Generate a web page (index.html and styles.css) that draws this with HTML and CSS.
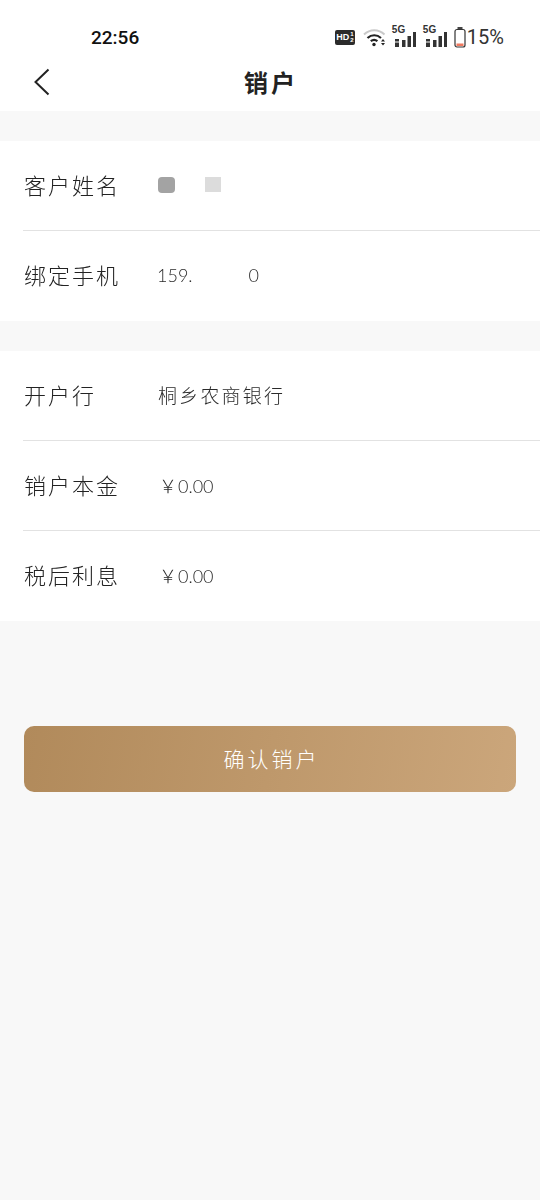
FILE: index.html
```html
<!DOCTYPE html>
<html lang="zh-CN">
<head>
    <meta charset="UTF-8">
    <meta name="viewport" content="width=device-width, initial-scale=1.0">
    <title>销户</title>
    <link rel="stylesheet" href="styles.css">
</head>
<body>
    <div class="top-area">
        <div class="status-bar">
            <div class="time">22:56</div>
            <div class="status-icons">
                <div class="hd-badge"><span class="hd-text">HD</span><span class="hd-nums"><i>1</i><i>2</i></span></div>
                <svg class="wifi" width="24" height="19" viewBox="0 0 24 19">
                    <path d="M1 6.500C7 .8 15.500 .8 21.500 6.500" fill="none" stroke="#c9c9c9" stroke-width="2"/>
                    <path d="M4.500 10C8.500 6.300 14 6.300 18 10" fill="none" stroke="#222" stroke-width="2.200"/>
                    <path d="M7.800 13.200C9.800 11.500 12.400 11.500 14.400 13.200" fill="none" stroke="#222" stroke-width="2.200"/>
                    <circle cx="11" cy="16.500" r="1.700" fill="#222"/>
                    <path d="M18 13.500h4l-2-2.500zM18 15h4l-2 2.500z" fill="#222"/>
                </svg>
                <div class="signal">
                    <span class="net">5G</span>
                    <svg width="24" height="18" viewBox="0 0 24 18">
                        <rect x="3" y="9" width="4" height="2.500" fill="#333"/><rect x="3" y="12.500" width="4" height="4.500" fill="#333"/>
                        <rect x="10" y="10" width="3.500" height="7" fill="#333"/>
                        <rect x="15.500" y="6" width="3.500" height="11" fill="#333"/>
                        <rect x="21" y="2" width="3" height="15" fill="#333"/>
                    </svg>
                </div>
                <div class="signal">
                    <span class="net">5G</span>
                    <svg width="24" height="18" viewBox="0 0 24 18">
                        <rect x="3" y="9" width="4" height="2.500" fill="#333"/><rect x="3" y="12.500" width="4" height="4.500" fill="#333"/>
                        <rect x="10" y="10" width="3.500" height="7" fill="#333"/>
                        <rect x="15.500" y="6" width="3.500" height="11" fill="#333"/>
                        <rect x="21" y="2" width="3" height="15" fill="#333"/>
                    </svg>
                </div>
                <svg class="battery" width="12" height="21" viewBox="0 0 12 21">
                    <rect x="3.500" y="0" width="5" height="2" fill="#444"/>
                    <rect x="1" y="2.500" width="10" height="17.500" rx="2" fill="none" stroke="#333" stroke-width="1.200"/>
                    <rect x="2.500" y="16.500" width="7" height="2.500" fill="#f0795f"/>
                </svg>
                <div class="battery-text">15%</div>
            </div>
        </div>
        <div class="nav-bar">
            <svg class="back" width="18" height="28" viewBox="0 0 18 28">
                <path d="M15.500 1.500L2.500 14L15.500 26.500" fill="none" stroke="#222" stroke-width="2"/>
            </svg>
            <div class="page-title">销户</div>
        </div>
    </div>

    <div class="section">
        <div class="row">
            <div class="label">客户姓名</div>
            <div class="value name-mask">
                <span class="mask-dark"></span>
                <span class="mask-light"></span>
            </div>
        </div>
        <div class="row">
            <div class="label">绑定手机</div>
            <div class="value phone"><span>159.</span><span>0</span></div>
        </div>
    </div>

    <div class="section">
        <div class="row">
            <div class="label">开户行</div>
            <div class="value bank">桐乡农商银行</div>
        </div>
        <div class="row">
            <div class="label">销户本金</div>
            <div class="value money"><span class="yen">￥</span>0.00</div>
        </div>
        <div class="row">
            <div class="label">税后利息</div>
            <div class="value money"><span class="yen">￥</span>0.00</div>
        </div>
    </div>

    <div class="btn-wrap">
        <button class="confirm-btn">确认销户</button>
    </div>
</body>
</html>
```

FILE: styles.css
```css
html, body {
    margin: 0;
    padding: 0;
    height: 100%;
    overflow: hidden;
}
body {
    background: #f8f8f8;
    font-family: "Noto Sans CJK SC", "Noto Sans", sans-serif;
    color: #333;
}
.top-area {
    background: #fff;
    height: 111px;
    margin-bottom: 30px;
}
.status-bar {
    display: flex;
    justify-content: space-between;
    align-items: center;
    box-sizing: border-box;
    height: 56px;
    padding: 18px 36px 0 91px;
}
.time {
    font-family: Roboto, "Liberation Sans", sans-serif;
    font-size: 19px;
    font-weight: 500;
    color: #111;
}
.status-icons {
    display: flex;
    align-items: center;
}
.hd-badge {
    display: flex;
    align-items: center;
    justify-content: center;
    gap: 1px;
    width: 20px;
    height: 15px;
    background: #2b2b2b;
    border-radius: 2px;
    color: #fff;
    margin-right: 8px;
}
.hd-text {
    font-family: "Liberation Sans", sans-serif;
    font-size: 9px;
    font-weight: 700;
    line-height: 15px;
}
.hd-nums {
    display: flex;
    flex-direction: column;
    font-family: "Liberation Sans", sans-serif;
    font-size: 6px;
    line-height: 6px;
    font-weight: 700;
}
.hd-nums i {
    font-style: normal;
}
.wifi {
    margin-right: 5px;
}
.signal {
    position: relative;
    width: 24px;
    height: 22px;
    display: flex;
    align-items: flex-end;
    margin-right: 7px;
}
.signal:last-of-type {
    margin-right: 3px;
}
.net {
    position: absolute;
    left: 0;
    top: -2px;
    font-family: "Liberation Sans", sans-serif;
    font-size: 10px;
    font-weight: 700;
    color: #333;
}
.battery {
    margin-right: 1px;
}
.battery-text {
    font-family: Roboto, "Liberation Sans", sans-serif;
    font-size: 20px;
    color: #333;
}
.nav-bar {
    position: relative;
    height: 55px;
    display: flex;
    align-items: center;
    justify-content: center;
}
.back {
    position: absolute;
    left: 33px;
    top: 12px;
}
.page-title {
    font-size: 24px;
    font-weight: 700;
    letter-spacing: 3px;
    color: #222;
    padding: 0 0 4px 2px;
}
.section {
    background: #fff;
    margin-bottom: 30px;
    padding-left: 23px;
}
.row {
    display: flex;
    align-items: center;
    height: 90px;
    box-sizing: border-box;
    border-bottom: 1px solid #e2e2e2;
}
.row:last-child {
    border-bottom: none;
}
.label {
    width: 134px;
    flex-shrink: 0;
    padding: 0 0 4px 1px;
    font-size: 22px;
    font-weight: 300;
    letter-spacing: 2px;
    color: #222;
    will-change: opacity;
}
.value {
    font-size: 19px;
    font-weight: 300;
    color: #2a2a2a;
    padding-bottom: 2px;
    will-change: opacity;
}
.bank {
    letter-spacing: 2.2px;
}
.money {
    font-family: Lato, "Noto Sans CJK SC", sans-serif;
    font-size: 18px;
}
.yen {
    margin: 0 1px;
}
.name-mask {
    display: flex;
    align-items: center;
    gap: 30px;
}
.mask-dark {
    width: 17px;
    height: 16px;
    background: #a3a3a3;
    border-radius: 4px;
}
.mask-light {
    width: 16px;
    height: 15px;
    background: #dcdcdc;
}
.phone {
    display: flex;
    gap: 56px;
    margin-left: -1px;
    font-family: Lato, "Liberation Sans", sans-serif;
    font-size: 18px;
}
.btn-wrap {
    padding: 75px 24px 0;
}
.confirm-btn {
    display: block;
    width: 100%;
    height: 66px;
    padding: 0 0 2px 3px;
    border: none;
    border-radius: 10px;
    background: linear-gradient(100deg, #b18a5b, #cba67b);
    color: #fff;
    font-family: "Noto Sans CJK SC", sans-serif;
    font-size: 21px;
    font-weight: 300;
    letter-spacing: 3px;
}
```
